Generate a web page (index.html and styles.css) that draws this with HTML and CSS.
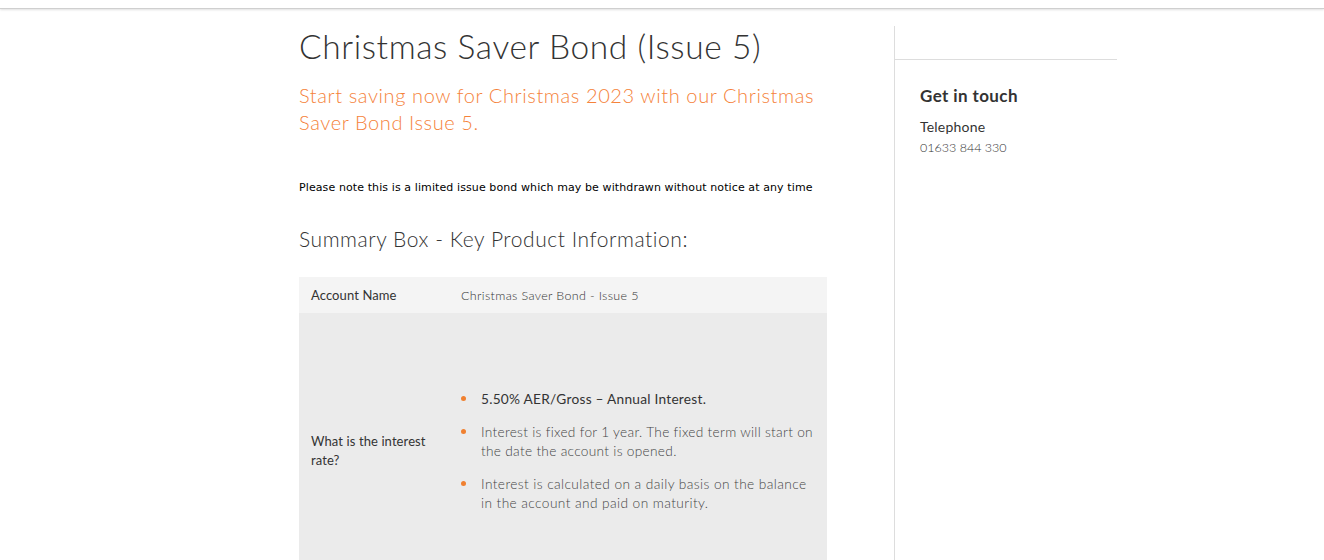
FILE: index.html
```html
<!DOCTYPE html>
<html lang="en">
<head>
<meta charset="utf-8">
<title>Christmas Saver Bond (Issue 5)</title>
<link rel="stylesheet" href="styles.css">
</head>
<body>
<header class="topbar"></header>
<div class="page">
  <main class="main">
    <h1 class="title">Christmas Saver Bond (Issue 5)</h1>
    <p class="lead">Start saving now for Christmas 2023 with our Christmas Saver Bond Issue 5.</p>
    <p class="note">Please note this is a limited issue bond which may be withdrawn without notice at any time</p>
    <h2 class="summary-title">Summary Box - Key Product Information:</h2>
    <table class="summary">
      <tr class="row-light">
        <th>Account Name</th>
        <td>Christmas Saver Bond - Issue 5</td>
      </tr>
      <tr class="row-dark">
        <th>What is the interest rate?</th>
        <td>
          <ul class="bullets">
            <li class="strong">5.50% AER/Gross – Annual Interest.</li>
            <li class="tight">Interest is fixed for 1 year. The fixed term will start on the date the account is opened.</li>
            <li>Interest is calculated on a daily basis on the balance in the account and paid on maturity.</li>
          </ul>
        </td>
      </tr>
    </table>
  </main>
  <aside class="sidebar">
    <div class="sidebar-top"></div>
    <div class="contact">
      <h3 class="contact-title">Get in touch</h3>
      <div class="contact-label">Telephone</div>
      <div class="contact-phone">01633 844 330</div>
    </div>
  </aside>
</div>
</body>
</html>
```
FILE: styles.css
```css
html, body {
  margin: 0;
  padding: 0;
  background: #fff;
}
body {
  font-family: Lato, "Noto Sans", sans-serif;
  color: #333;
}
.topbar {
  height: 8px;
  border-bottom: 1px solid #cfcfcf;
  box-shadow: 0 1px 2px rgba(0,0,0,0.12);
}
.page {
  display: flex;
  margin-left: 299px;
  padding-top: 17px;
}
.main {
  width: 528px;
  margin-right: 67px;
}
.title {
  margin: -2px 0 0;
  font-size: 33.5px;
  font-weight: 300;
  line-height: 44px;
  color: #333;
  letter-spacing: 0.6px;
}
.lead {
  margin: 14px 0 0;
  font-size: 20px;
  line-height: 27px;
  font-weight: 300;
  color: #f5823a;
  letter-spacing: 0.6px;
}
.note {
  margin: 44px 0 0;
  font-family: "DejaVu Sans", Verdana, sans-serif;
  font-size: 11px;
  line-height: 16px;
  color: #000;
  letter-spacing: 0.1px;
  white-space: nowrap;
}
.summary-title {
  margin: 28px 0 0;
  font-size: 21px;
  font-weight: 300;
  line-height: 30px;
  color: #333;
  letter-spacing: 0.55px;
}
.summary {
  margin-top: 23px;
  width: 528px;
  border-collapse: collapse;
}
.summary th, .summary td {
  text-align: left;
  vertical-align: middle;
}
.summary th {
  width: 126px;
  padding: 0 12px;
  font-size: 13px;
  font-weight: 400;
  line-height: 19px;
  color: #333;
  letter-spacing: 0.1px;
}
.summary td {
  padding: 0 12px;
  font-size: 12.5px;
  font-weight: 300;
  color: #333;
  letter-spacing: 0.35px;
}
.row-light {
  background: #f4f4f4;
  height: 36px;
}
.row-dark {
  background: #ebebeb;
}
.row-dark td {
  padding-top: 76px;
  padding-bottom: 76px;
}
.bullets {
  margin: 0;
  padding: 0;
  list-style: none;
}
.bullets li {
  position: relative;
  padding-left: 20px;
  font-size: 13.7px;
  line-height: 19px;
  font-weight: 300;
  color: #454545;
  letter-spacing: 0.42px;
  margin-bottom: 14px;
}
.bullets li:last-child {
  margin-bottom: 0;
}
.bullets li::before {
  content: "";
  position: absolute;
  left: 0;
  top: 7px;
  width: 5px;
  height: 5px;
  border-radius: 50%;
  background: #f08030;
}
.bullets li.strong {
  font-weight: 400;
  color: #333;
  letter-spacing: 0.25px;
}
.bullets li.tight {
  letter-spacing: 0.3px;
}
.sidebar {
  width: 222px;
  border-left: 1px solid #ddd;
  min-height: 600px;
}
.sidebar-top {
  height: 33px;
  border-bottom: 1px solid #ddd;
}
.contact {
  padding: 25px 25px 0;
}
.contact-title {
  margin: 0;
  font-size: 17px;
  font-weight: 700;
  line-height: 22px;
  color: #333;
  letter-spacing: 0.4px;
}
.contact-label {
  margin-top: 10px;
  font-size: 14px;
  line-height: 19px;
  color: #333;
  letter-spacing: 0.2px;
}
.contact-phone {
  margin-top: 3px;
  font-size: 12.5px;
  line-height: 18px;
  font-weight: 300;
  color: #333;
}
```
